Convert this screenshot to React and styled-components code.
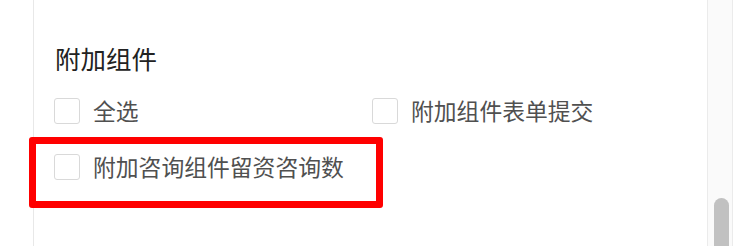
import styled, { createGlobalStyle } from 'styled-components'

const GlobalStyle = createGlobalStyle`
  html, body {
    margin: 0;
    padding: 0;
    background: #ffffff;
  }
  body {
    font-family: "Noto Sans CJK SC", "Noto Sans", sans-serif;
  }
`

const options = [
  { id: 'all', label: '全选' },
  { id: 'form', label: '附加组件表单提交' },
  { id: 'consult', label: '附加咨询组件留资咨询数', marked: true },
]

export default function App() {
  return (
    <Page>
      <GlobalStyle />
      <Gutter />
      <Panel>
        <Title>附加组件</Title>
        <OptionGrid>
          {options.map(opt => (
            <Option key={opt.id}>
              <Box type="checkbox" />
              <Label>{opt.label}</Label>
              {opt.marked && <Highlight />}
            </Option>
          ))}
        </OptionGrid>
      </Panel>
      <Track>
        <Thumb />
      </Track>
      <RightEdge />
    </Page>
  )
}

const Page = styled.div`
  display: flex;
  height: 246px;
  overflow: hidden;
`

const Gutter = styled.div`
  width: 33px;
  flex-shrink: 0;
`

const Panel = styled.div`
  flex: 1;
  border-left: 1px solid #e8e8e8;
  padding: 42px 0 0 21px;
`

const Title = styled.div`
  font-size: 25.5px;
  line-height: 32px;
  color: #222222;
`

const OptionGrid = styled.div`
  display: grid;
  grid-template-columns: 318px 1fr;
  row-gap: 16px;
  margin-top: 17px;
`

const Option = styled.label`
  position: relative;
  display: flex;
  align-items: center;
  gap: 13px;
  height: 40px;
  margin-left: -1px;
`

const Box = styled.input`
  appearance: none;
  margin: 0;
  width: 26px;
  height: 26px;
  border: 1px solid #d9d9d9;
  border-radius: 3px;
  background: #fff;
  box-sizing: border-box;
`

const Label = styled.span`
  font-size: 22.8px;
  line-height: 30px;
  color: #505050;
  white-space: nowrap;
`

const Highlight = styled.div`
  position: absolute;
  left: -25px;
  top: -10px;
  width: 354px;
  height: 71px;
  border: 7px solid #ff0000;
  border-radius: 3px;
  box-sizing: border-box;
  pointer-events: none;
`

const Track = styled.div`
  width: 26px;
  flex-shrink: 0;
  box-sizing: border-box;
  background: #fafafa;
  border-left: 1px solid #ebebeb;
  border-right: 1px solid #ebebeb;
  padding: 198px 0 0 6px;
`

const Thumb = styled.div`
  width: 15px;
  height: 80px;
  border-radius: 8px;
  background: #c1c1c1;
`

const RightEdge = styled.div`
  width: 21px;
  flex-shrink: 0;
`
